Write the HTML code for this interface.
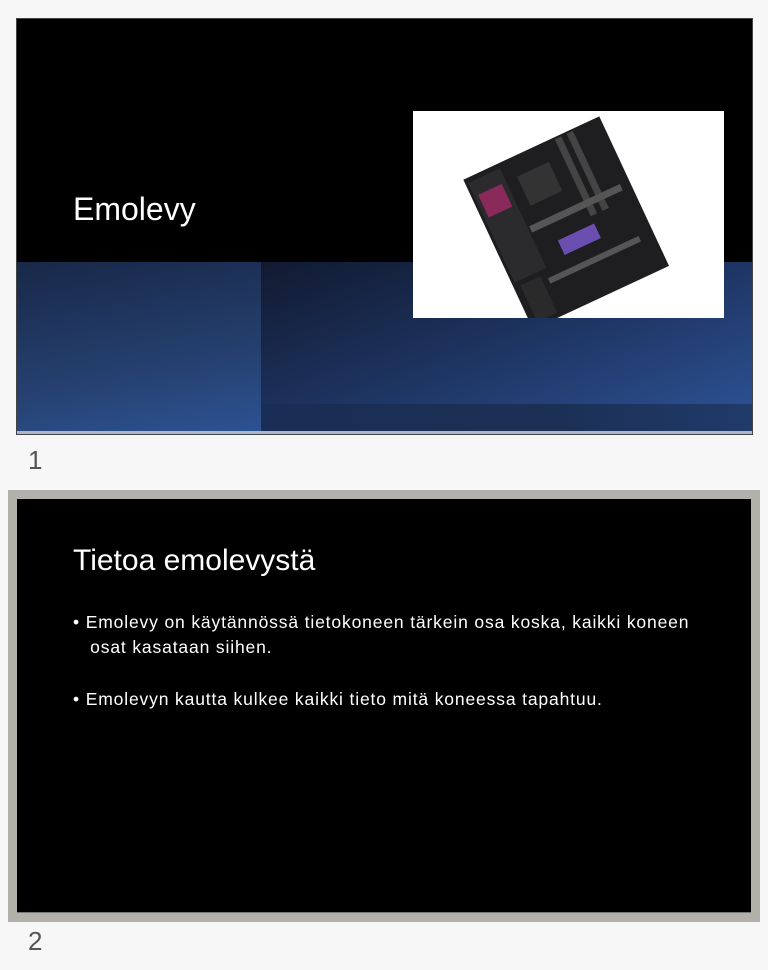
<!DOCTYPE html>
<html><head><meta charset="utf-8"><style>
*{margin:0;padding:0;box-sizing:border-box}
body{width:768px;height:970px;background:#f7f7f7;position:relative;overflow:hidden;font-family:"Liberation Sans",sans-serif}
.abs{position:absolute}
.s1{left:16px;top:18px;width:737px;height:417px;background:#000;border:1px solid #444;overflow:hidden}
.t{color:#fff;font-family:"Liberation Sans",sans-serif}
.num{color:#555;font-size:26px;font-weight:300}
.b{font-size:17.5px;line-height:25px;letter-spacing:0.85px;white-space:nowrap}
</style></head><body>
<div class="abs s1">
  <div class="abs" style="left:0;top:243px;width:244px;height:172px;background:linear-gradient(170deg,#182848 0%,#25406f 60%,#2d5394 100%)"></div>
  <div class="abs" style="left:244px;top:243px;width:493px;height:142px;background:linear-gradient(160deg,#111a30 0%,#1e3563 55%,#2b4f8f 100%)"></div>
  <div class="abs" style="left:244px;top:385px;width:493px;height:30px;background:linear-gradient(90deg,#1a2d55,#1c3055 60%,#203a6a)"></div>
  <div class="abs" style="left:0;top:412px;width:737px;height:3px;background:#a9b6cc"></div>
  <div class="abs t" style="left:56px;top:172px;font-size:32px;font-weight:300">Emolevy</div>
  <div class="abs" style="left:396px;top:92px;width:311px;height:207px;background:#fff;overflow:hidden">
    <svg width="311" height="207" viewBox="0 0 311 207">
      <g transform="rotate(-25 150 105)">
        <rect x="75" y="30" width="150" height="165" fill="#1e1e20"/>
        <rect x="78" y="35" width="35" height="110" fill="#2b2b2e"/>
        <rect x="82" y="50" width="26" height="25" fill="#8a2a5a"/>
        <rect x="125" y="50" width="35" height="32" fill="#333"/>
        <rect x="175" y="32" width="7" height="85" fill="#444"/>
        <rect x="188" y="32" width="7" height="85" fill="#444"/>
        <rect x="115" y="100" width="100" height="7" fill="#555"/>
        <rect x="135" y="125" width="40" height="16" fill="#6a4fb0"/>
        <rect x="110" y="155" width="100" height="6" fill="#555"/>
        <rect x="82" y="150" width="22" height="40" fill="#2a2a2a"/>
      </g>
    </svg>
  </div>
</div>
<div class="abs num" style="left:28px;top:445px">1</div>
<div class="abs" style="left:8px;top:490px;width:752px;height:432px;background:#b3b0ab"></div>
<div class="abs" style="left:17px;top:499px;width:734px;height:414px;background:#000;border-bottom:1px solid #777"></div>
<div class="abs t" style="left:73px;top:544px;font-size:30px;font-weight:300">Tietoa emolevystä</div>
<div class="abs t b" style="left:73px;top:610px">•&nbsp;Emolevy on käytännössä tietokoneen tärkein osa koska, kaikki koneen<br>&nbsp;&nbsp;&nbsp;osat kasataan siihen.</div>
<div class="abs t b" style="left:73px;top:687px">•&nbsp;Emolevyn kautta kulkee kaikki tieto mitä koneessa tapahtuu.</div>
<div class="abs num" style="left:28px;top:926px">2</div>
</body></html>
